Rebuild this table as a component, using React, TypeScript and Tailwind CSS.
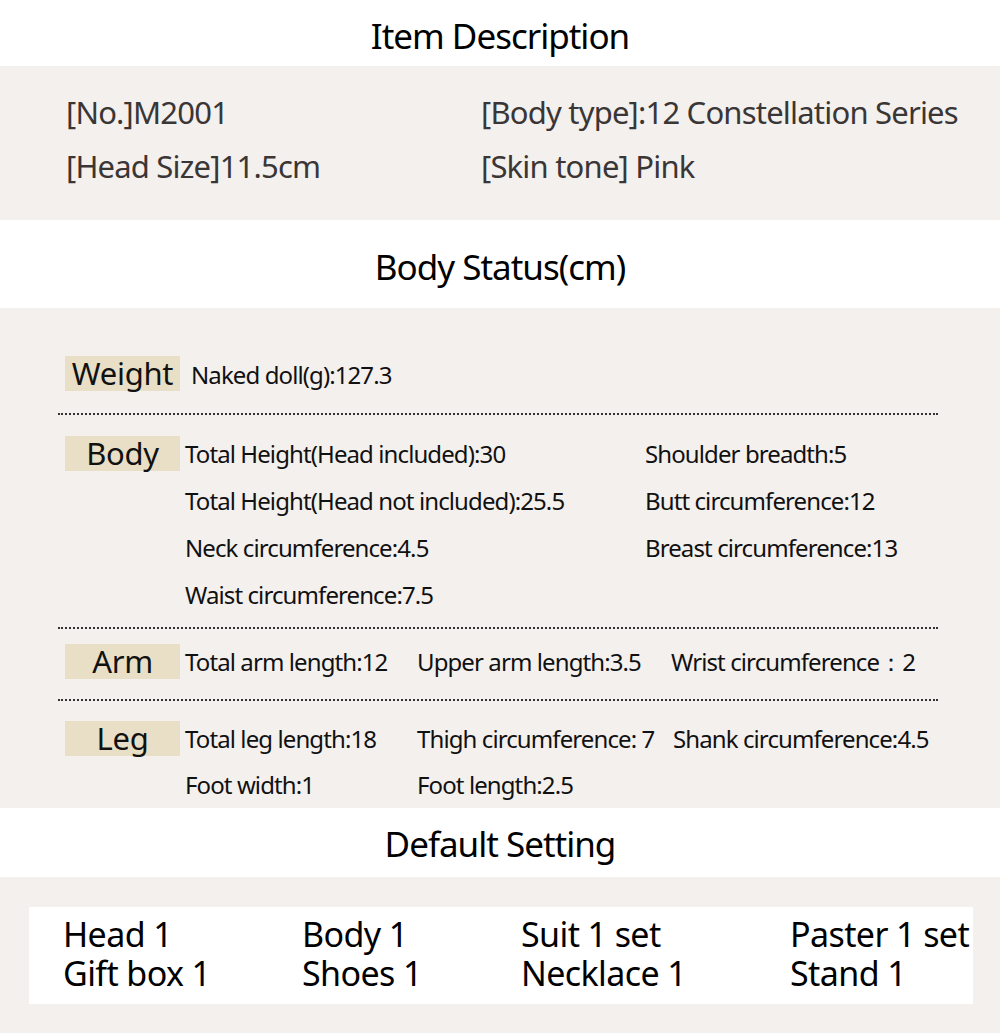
const font = "font-['Noto_Sans',sans-serif]";

function Heading({ title, className }: { title: string; className: string }) {
  return (
    <div className={`flex items-center justify-center bg-white text-[35px] leading-[44px] tracking-[-1px] text-black ${className}`}>
      {title}
    </div>
  );
}

function Label({ text, className = "" }: { text: string; className?: string }) {
  return (
    <div
      className={`w-[115px] h-[35px] shrink-0 bg-[#e8dfc6] flex items-center justify-center text-[31px] leading-[35px] tracking-[-0.3px] text-[#111] ${className}`}
    >
      {text}
    </div>
  );
}

function Dots() {
  return <div className="mx-[58px] w-[880px] border-t-2 border-dotted border-[#333]" />;
}

const bodyRows = [
  ["Total Height(Head included):30", "Shoulder breadth:5"],
  ["Total Height(Head not included):25.5", "Butt circumference:12"],
  ["Neck circumference:4.5", "Breast circumference:13"],
  ["Waist circumference:7.5", ""],
];

const defaults = [
  ["Head 1", "Body 1", "Suit 1 set", "Paster 1 set"],
  ["Gift box 1", "Shoes 1", "Necklace 1", "Stand 1"],
];

export default function App() {
  return (
    <div className={`w-[1000px] h-[1033px] bg-[#f4f0ee] ${font}`}>
      <Heading title="Item Description" className="h-[66px] pt-[6px]" />

      <div className="h-[154px] bg-[#f4f0ee] pt-[19px] pl-[66px] grid grid-cols-[415px_1fr] auto-rows-[54px] content-start items-center text-[31px] leading-[42px] tracking-[-0.8px] text-[#3a3636]">
        <span>[No.]M2001</span>
        <span className="whitespace-nowrap">[Body type]:12 Constellation Series</span>
        <span>[Head Size]11.5cm</span>
        <span>[Skin tone] Pink</span>
      </div>

      <Heading title="Body Status(cm)" className="h-[88px] pt-[6px]" />

      <div className="h-[500px] bg-[#f4f0ee] pt-[48px] text-[24px] leading-[32px] tracking-[-0.9px] text-[#111]">
        <div className="flex items-center h-[35px] pl-[65px]">
          <Label text="Weight" />
          <span className="ml-[11px] pt-[2px]">Naked doll(g):127.3</span>
        </div>
        <div className="mt-[22px]">
          <Dots />
        </div>

        <div className="mt-[15px] flex pl-[65px]">
          <Label text="Body" className="mt-[6px]" />
          <div className="ml-[5px] grid grid-cols-[460px_1fr] auto-rows-[47px] items-center">
            {bodyRows.flat().map((t, i) => (
              <span key={i} className="whitespace-nowrap">
                {t}
              </span>
            ))}
          </div>
        </div>
        <div className="mt-[9px]">
          <Dots />
        </div>

        <div className="mt-[15px] flex items-center h-[35px] pl-[65px]">
          <Label text="Arm" />
          <div className="ml-[5px] grid grid-cols-[232px_254px_1fr] items-center whitespace-nowrap">
            <span>Total arm length:12</span>
            <span>Upper arm length:3.5</span>
            <span>Wrist circumference：2</span>
          </div>
        </div>
        <div className="mt-[20px]">
          <Dots />
        </div>

        <div className="mt-[15px] flex pl-[65px]">
          <Label text="Leg" className="mt-[5px]" />
          <div className="ml-[5px] grid grid-cols-[232px_256px_1fr] auto-rows-[46px] items-center whitespace-nowrap">
            <span>Total leg length:18</span>
            <span>Thigh circumference: 7</span>
            <span>Shank circumference:4.5</span>
            <span>Foot width:1</span>
            <span>Foot length:2.5</span>
            <span />
          </div>
        </div>
      </div>

      <Heading title="Default Setting" className="h-[69px] pt-[2px]" />

      <div className="h-[156px] bg-[#f4f0ee] pt-[30px] pl-[29px] pr-[27px]">
        <div className="h-[97px] bg-white pt-[8px] pl-[34px] grid grid-cols-[239px_219px_269px_1fr] auto-rows-[39px] content-start items-center text-[34px] leading-[39px] tracking-[-0.6px] text-black">
          {defaults.flat().map((t) => (
            <span key={t} className="whitespace-nowrap">
              {t}
            </span>
          ))}
        </div>
      </div>
    </div>
  );
}
